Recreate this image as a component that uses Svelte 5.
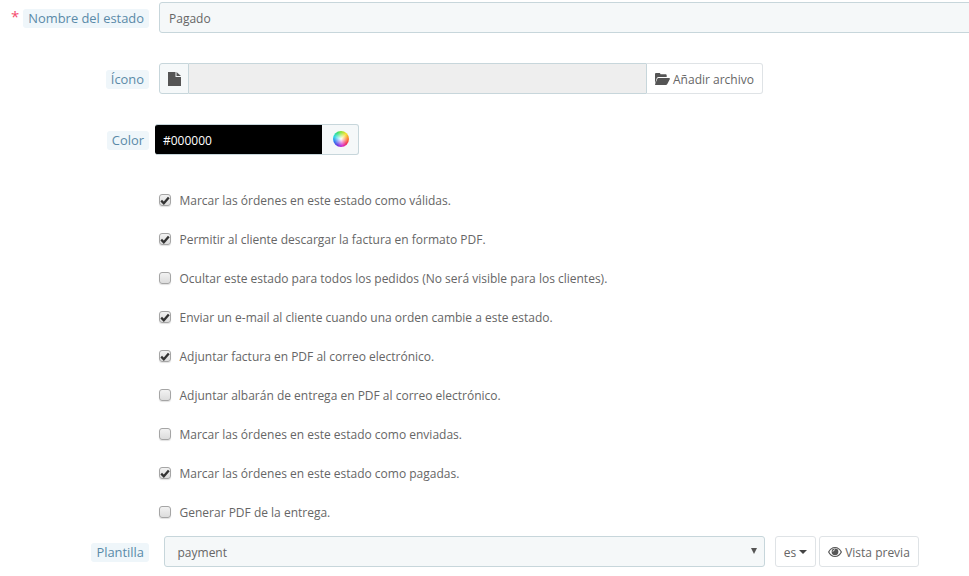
<script>
  const options = [
    { text: 'Marcar las órdenes en este estado como válidas.', checked: true },
    { text: 'Permitir al cliente descargar la factura en formato PDF.', checked: true },
    { text: 'Ocultar este estado para todos los pedidos (No será visible para los clientes).', checked: false },
    { text: 'Enviar un e-mail al cliente cuando una orden cambie a este estado.', checked: true },
    { text: 'Adjuntar factura en PDF al correo electrónico.', checked: true },
    { text: 'Adjuntar albarán de entrega en PDF al correo electrónico.', checked: false },
    { text: 'Marcar las órdenes en este estado como enviadas.', checked: false },
    { text: 'Marcar las órdenes en este estado como pagadas.', checked: true },
    { text: 'Generar PDF de la entrega.', checked: false }
  ];
</script>

<form class="page">
  <div class="row first">
    <div class="label-col"><span class="req">*</span><span class="label">Nombre del estado</span></div>
    <div class="input name">Pagado</div>
  </div>

  <div class="row icon-row">
    <div class="label-col"><span class="label">Ícono</span></div>
    <div class="file-group">
      <span class="addon">
        <svg width="13" height="14" viewBox="0 0 13 14"><path d="M0 0h7.500v5h5.500v9H0z M8.500 0l4.500 4H8.500z" fill="#555"/></svg>
      </span>
      <span class="file-name"></span>
      <span class="btn file-btn">
        <svg width="15" height="12" viewBox="0 0 15 12"><path d="M0 11V1.200C0 .5.5 0 1.200 0h3c.7 0 1.200.5 1.300 1.200h5c.7 0 1.200.5 1.200 1.200V4H3.600C2.800 4 2.200 4.400 1.800 5z" fill="#555"/><path d="M3.400 5H14c.8 0 1.200.6.800 1.200L12.300 11c-.3.6-.8 1-1.500 1H.8c-.7 0-.9-.5-.6-1l2-5c.3-.6.7-1 1.200-1z" fill="#555"/></svg>
        <span class="btn-text">Añadir archivo</span>
      </span>
    </div>
  </div>

  <div class="row color-row">
    <div class="label-col short"><span class="label">Color</span></div>
    <div class="color-group">
      <span class="color-value">#000000</span>
      <span class="wheel-addon"><span class="wheel"></span></span>
    </div>
  </div>

  <div class="checks">
    {#each options as opt}
      <div class="check">
        <span class="box">
          {#if opt.checked}
            <svg width="10" height="9" viewBox="0 0 10 9"><path d="M1.200 4.600 3.800 7.200 8.800 1.400" fill="none" stroke="#333" stroke-width="2.300"/></svg>
          {/if}
        </span>
        <span class="check-text">{opt.text}</span>
      </div>
    {/each}
  </div>

  <div class="row template-row">
    <div class="label-col"><span class="label">Plantilla</span></div>
    <div class="input select">
      <span>payment</span>
      <span class="select-arrow"></span>
    </div>
    <span class="btn lang"><span class="btn-text">es</span> <span class="caret"></span></span>
    <span class="btn preview">
      <svg width="14" height="10" viewBox="0 0 14 10">
        <path d="M7 0c3 0 5.600 2 7 5-1.400 3-4 5-7 5S1.400 8 0 5c1.400-3 4-5 7-5z" fill="#555"/>
        <path d="M7 1.100C4.800 1.100 2.700 2.500 1.300 5c1.400 2.500 3.500 3.900 5.700 3.900s4.300-1.400 5.700-3.900C11.300 2.500 9.200 1.100 7 1.100z" fill="#fff"/>
        <circle cx="7" cy="4.800" r="3.400" fill="#555"/>
        <path d="M5 4.600c0-1 .9-1.800 2-1.800" fill="none" stroke="#fff" stroke-width=".9"/>
      </svg>
      <span class="btn-text">Vista previa</span>
    </span>
  </div>
</form>

<style>
  :global(body) {
    background: #fff;
    overflow: hidden;
  }

  .page {
    height: 576px;
    overflow: hidden;
    padding-top: 2px;
    box-sizing: border-box;
    font-family: "Open Sans", sans-serif;
    font-size: 12px;
    color: #666;
  }

  .row {
    display: flex;
    align-items: center;
    height: 31px;
  }

  .icon-row,
  .color-row {
    margin-top: 30px;
  }

  .label-col {
    width: 149px;
    margin-right: 10px;
    padding-top: 2px;
    flex: none;
    display: flex;
    justify-content: flex-end;
    align-items: center;
    box-sizing: border-box;
  }

  .label-col.short {
    margin-right: 6px;
  }

  .template-row .label-col {
    margin-right: 15px;
  }

  .label {
    background: #eff6fa;
    color: #5a8aa8;
    font-size: 12.9px;
    line-height: 19px;
    padding: 0 5px;
    border-radius: 3px;
  }

  .req {
    color: #f54c6e;
    font-size: 15px;
    line-height: 15px;
    margin-right: 4px;
    margin-top: -4px;
  }

  .input {
    box-sizing: border-box;
    height: 31px;
    line-height: 29px;
    padding: 1px 9px 0;
    background: #f5f8f9;
    border: 1px solid #c7d6db;
    border-radius: 3px;
    color: #666;
  }

  .name {
    flex: 1;
    margin-right: -6px;
  }

  .file-group {
    display: flex;
    width: 604px;
    height: 31px;
  }

  .addon {
    box-sizing: border-box;
    width: 30px;
    display: flex;
    align-items: center;
    justify-content: center;
    background: #f5f8f9;
    border: 1px solid #c7d6db;
    border-radius: 3px 0 0 3px;
  }

  .file-name {
    flex: 1;
    background: #eee;
    border-top: 1px solid #c7d6db;
    border-bottom: 1px solid #c7d6db;
  }

  .btn {
    box-sizing: border-box;
    height: 31px;
    display: inline-flex;
    align-items: center;
    justify-content: center;
    gap: 3px;
    background: #fff;
    color: #666;
    border: 1px solid #dfe3e6;
    border-radius: 3px;
    white-space: nowrap;
  }

  .btn-text {
    padding-top: 2px;
  }

  .file-btn {
    width: 117px;
    border-left-color: #c7d6db;
    border-radius: 0 3px 3px 0;
  }

  .color-group {
    display: flex;
    width: 204px;
    height: 31px;
  }

  .color-value {
    width: 167px;
    background: #000;
    color: #fff;
    line-height: 29px;
    padding: 1px 0 0 8px;
    border-top: 1px solid #c7d6db;
    border-bottom: 1px solid #c7d6db;
    box-sizing: border-box;
    border-radius: 3px 0 0 3px;
  }

  .wheel-addon {
    flex: 1;
    display: flex;
    align-items: center;
    justify-content: center;
    padding-left: 2px;
    background: #f5f8f9;
    border: 1px solid #c7d6db;
    border-left: none;
    border-radius: 0 3px 3px 0;
  }

  .wheel {
    width: 16px;
    height: 16px;
    margin-top: -1px;
    border-radius: 50%;
    background:
      radial-gradient(circle, #fff 0, rgba(255, 255, 255, 0.6) 25%, rgba(255, 255, 255, 0) 62%),
      conic-gradient(#8be23a, #f7e12e 45deg, #fb7a2c 90deg, #f0305f 130deg, #d42fd0 170deg, #6a3be0 210deg, #2f7cf0 250deg, #2fd8e6 290deg, #38e07a 330deg, #8be23a);
  }

  .checks {
    display: flex;
    flex-direction: column;
    gap: 21px;
    margin-top: 36px;
    padding-left: 159px;
  }

  .check {
    display: flex;
    align-items: center;
    height: 18px;
    line-height: 18px;
  }

  .check-text {
    padding-top: 2px;
  }

  .box {
    box-sizing: border-box;
    width: 12px;
    height: 12px;
    margin-right: 8.5px;
    display: flex;
    align-items: center;
    justify-content: center;
    background: linear-gradient(#f2f2f2, #dcdcdc);
    border: 1px solid #a5a5a5;
    border-radius: 3px;
    box-shadow: 0 1px 1px rgba(0, 0, 0, 0.12);
  }

  .template-row {
    margin-top: 15px;
  }

  .select {
    width: 601px;
    display: flex;
    justify-content: space-between;
    align-items: center;
    padding: 1px 7px 0 12.500px;
  }

  .select-arrow {
    width: 0;
    height: 0;
    border-left: 3px solid transparent;
    border-right: 3px solid transparent;
    border-top: 6px solid #555;
    margin-top: -3px;
  }

  .lang {
    width: 41px;
    margin-left: 10px;
  }

  .caret {
    width: 0;
    height: 0;
    border-left: 4px solid transparent;
    border-right: 4px solid transparent;
    border-top: 4px solid #444;
  }

  .preview {
    width: 100px;
    margin-left: 3px;
  }
</style>
